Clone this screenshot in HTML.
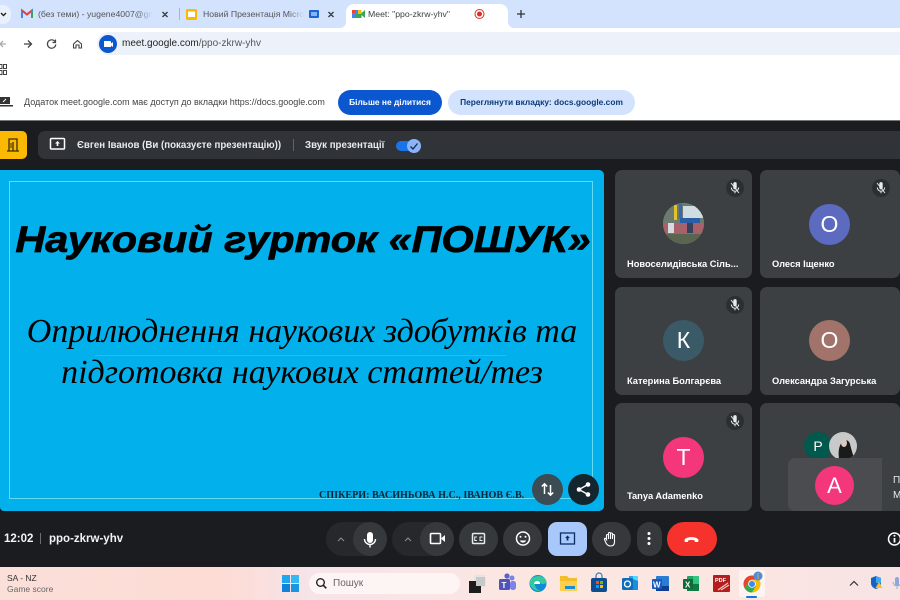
<!DOCTYPE html>
<html><head><meta charset="utf-8"><style>
html,body{margin:0;padding:0;width:900px;height:600px;overflow:hidden;background:#1b1c1f;font-family:"Liberation Sans",sans-serif}
.a{position:absolute;white-space:nowrap}
svg{position:absolute;overflow:visible}
.tile{position:absolute;width:137px;height:108px;background:#3c4043;border-radius:7px}
.av{position:absolute;width:41px;height:41px;border-radius:50%;color:#fff;font-size:23px;line-height:41px;text-align:center}
.nm{position:absolute;color:#fff;font-size:9.300px;font-weight:bold;white-space:nowrap}
.pill{position:absolute;background:#36393c;border-radius:17px;height:34px;top:522px}
</style></head><body>
<!-- tab strip -->
<div class="a" style="left:0;top:0;width:900px;height:28px;background:#d3e3fd"></div>
<div class="a" style="left:0;top:5px;width:11px;height:19px;background:#eaf1fd;border-radius:0 8px 8px 0"></div>
<svg style="left:0;top:0" width="900" height="28"><path d="M1 13l2.500 2.500L6 13" stroke="#222" stroke-width="1.400" fill="none"/>
<path d="M22 18V10.500l5 4 5-4V18" fill="none" stroke="#4285f4" stroke-width="2"/><path d="M22 10.500l5 4 5-4" fill="none" stroke="#ea4335" stroke-width="2"/><path d="M32 11v7" stroke="#34a853" stroke-width="2"/>
<path d="M162.500 12l5 5M167.500 12l-5 5M328.500 12l5 5M333.500 12l-5 5M493.500 12l5 5M498.500 12l-5 5" stroke="#333" stroke-width="1.300"/>
<rect x="179" y="8" width="1" height="12" fill="#9db8dc"/>
<rect x="186" y="9" width="11" height="11" rx="1.500" fill="#fbb900"/><rect x="188" y="11.500" width="7" height="5.500" fill="#fff"/>
<rect x="309" y="10" width="10" height="8" rx="1" fill="#1967d2"/><rect x="311" y="12" width="6" height="4" fill="#8ab4f8"/></svg>
<div class="a" style="left:38px;top:9px;font-size:8.700px;color:#555;width:115px;overflow:hidden;-webkit-mask-image:linear-gradient(90deg,#000 85%,transparent)">(без теми) - yugene4007@gmail.com</div>
<div class="a" style="left:203px;top:9px;font-size:8.700px;color:#555;width:101px;overflow:hidden;-webkit-mask-image:linear-gradient(90deg,#000 85%,transparent)">Новий Презентація Microsoft</div>
<div class="a" style="left:346px;top:4px;width:162px;height:24px;background:#fff;border-radius:8px 8px 0 0"></div>
<svg style="left:340px;top:22px" width="176" height="6"><path d="M0 6a6 6 0 0 0 6-6v6zM168 0a6 6 0 0 0 6 6h-6z" fill="#fff"/></svg>
<div class="a" style="left:368px;top:9px;font-size:8.700px;color:#3c4043">Meet: "ppo-zkrw-yhv"</div>
<svg style="left:340px;top:0" width="200" height="28"><rect x="12" y="10" width="6" height="8" fill="#4285f4"/><rect x="18" y="10" width="3.500" height="4" fill="#fbbc04"/><rect x="15" y="14" width="6.500" height="4" fill="#34a853"/><path d="M12 10h3v3h-3z" fill="#ea4335"/><path d="M21.500 13l3.500-3v8l-3.500-3z" fill="#34a853"/>
<circle cx="139.500" cy="14" r="4.500" fill="none" stroke="#d93025" stroke-width="1"/><circle cx="139.500" cy="14" r="2.500" fill="#d93025"/>
<path d="M181 10v8M177 14h8" stroke="#333" stroke-width="1.300"/></svg>
<!-- toolbar -->
<div class="a" style="left:0;top:28px;width:900px;height:92px;background:#fff"></div>
<div class="a" style="left:97px;top:32px;width:803px;height:23px;background:#edf2fa;border-radius:12px 0 0 12px"></div>
<svg style="left:0;top:28px" width="100" height="28"><path d="M0 16h6M3 13l-3 3 3 3" stroke="#aaa" stroke-width="1.300" fill="none"/>
<path d="M24 16h7M28 12.500l3.500 3.500-3.500 3.500" stroke="#444" stroke-width="1.300" fill="none"/>
<path d="M55 13.500a4.200 4.200 0 1 0 .8 3M55.500 11.500v3h-3" stroke="#444" stroke-width="1.200" fill="none"/>
<path d="M73.500 16l4-3.500 4 3.500v4h-2.500v-3h-3v3h-2.500z" stroke="#444" stroke-width="1.100" fill="none"/></svg>
<div class="a" style="left:99px;top:35px;width:18px;height:18px;border-radius:50%;background:#0b57d0"></div>
<svg style="left:99px;top:35px" width="18" height="18"><path d="M5 6h6a1 1 0 0 1 1 1v5H5z" fill="#fff"/><path d="M12 8.500l2-1.500v5l-2-1.500" fill="#fff"/></svg>
<div class="a" style="left:122px;top:38px;font-size:10px;color:#1f1f1f">meet.google.com<span style="color:#555">/ppo-zkrw-yhv</span></div>
<svg style="left:0;top:64px" width="8" height="12"><path d="M-2 .5h4v4h-4zM-2 6.500h4v4h-4zM3.500.5h3v4h-3zM3.500 6.500h3v4h-3z" fill="none" stroke="#444"/></svg>
<!-- info bar -->
<svg style="left:0;top:97px" width="14" height="11"><path d="M0 0h10v7H0z" fill="#333"/><path d="M0 8h13v1.500H0z" fill="#333"/><path d="M3 5l3-3" stroke="#fff"/></svg>
<div class="a" style="left:24px;top:97px;font-size:9px;color:#444">Додаток meet.google.com має доступ до вкладки https://docs.google.com</div>
<div class="a" style="left:338px;top:90px;width:104px;height:25px;line-height:25px;border-radius:13px;background:#0b57d0;color:#fff;font-size:8.400px;font-weight:bold;text-align:center">Більше не ділитися</div>
<div class="a" style="left:448px;top:90px;width:187px;height:25px;line-height:25px;border-radius:13px;background:#d3e3fd;color:#0a3a7a;font-size:8.400px;font-weight:bold;text-align:center">Переглянути вкладку: docs.google.com</div>
<div class="a" style="left:0;top:120px;width:900px;height:1px;background:#777"></div>
<!-- meet dark -->
<div class="a" style="left:0;top:121px;width:900px;height:446px;background:#1b1c1f"></div>
<div class="a" style="left:0;top:131px;width:27px;height:28px;background:#fbb904;border-radius:0 5px 5px 0"></div>
<svg style="left:0;top:131px" width="26" height="28"><path d="M9 20V8h8v12M7 20h12M13 11v9" fill="none" stroke="#3c3000" stroke-width="1.300"/><path d="M10.500 12h1v5h-1z" fill="#3c3000"/></svg>
<div class="a" style="left:38px;top:131px;width:862px;height:28px;background:#303438;border-radius:7px 0 0 7px"></div>
<svg style="left:49px;top:137px" width="18" height="16"><rect x="1.500" y="1.500" width="14" height="10.500" rx="1" fill="none" stroke="#fff" stroke-width="1.500"/><path d="M8.500 4l2.500 2.500H9.300V9H7.700V6.500H6z" fill="#fff"/></svg>
<div class="a" style="left:77px;top:140px;font-size:9.700px;font-weight:bold;color:#e8eaed">Євген Іванов (Ви (показуєте презентацію))</div>
<div class="a" style="left:293px;top:139px;width:1px;height:12px;background:#5f6368"></div>
<div class="a" style="left:305px;top:140px;font-size:9.700px;font-weight:bold;color:#e8eaed">Звук презентації</div>
<div class="a" style="left:396px;top:141px;width:20px;height:10px;border-radius:5px;background:#1a73e8"></div>
<div class="a" style="left:407px;top:139px;width:14px;height:14px;border-radius:50%;background:#8ab4f8"></div>
<svg style="left:407px;top:139px" width="14" height="14"><path d="M3.500 7.500l2.500 2.500 4.500-5.500" fill="none" stroke="#1b2b45" stroke-width="1.300"/></svg>
<!-- slide -->
<div class="a" style="left:0;top:170px;width:604px;height:341px;background:#02b1ec;border-radius:0 5px 5px 4px;overflow:hidden">
 <div class="a" style="left:9px;top:11px;width:582px;height:316px;border:1px solid #62dbf2"></div>
 <div class="a" style="left:95px;top:185px;width:411px;height:1px;background:#22bfe6"></div>
 <div class="a" style="left:303px;top:48px;transform:translateX(-50%) scaleX(1.104);font:italic bold 37.500px 'Liberation Sans',sans-serif;color:#000;-webkit-text-stroke:.7px #000">Науковий гурток «ПОШУК»</div>
 <div class="a" style="left:0;top:141px;width:604px;text-align:center;font:italic 34px 'Liberation Serif',serif;color:#000;line-height:41px">Оприлюднення наукових здобутків та<br>підготовка наукових статей/тез</div>
 <div class="a" style="left:319px;top:320px;font:bold 10.100px 'Liberation Serif',serif;color:#06283d">СПІКЕРИ: ВАСИНЬОВА Н.С., ІВАНОВ Є.В.</div>
</div>
<div class="a" style="left:532px;top:474px;width:31px;height:31px;border-radius:50%;background:#3c4b54"></div>
<svg style="left:532px;top:474px" width="31" height="31"><path d="M12.500 20V10M9.800 12.500l2.700-2.700 2.700 2.700M18.500 11v10M15.800 18.500l2.700 2.700 2.700-2.700" fill="none" stroke="#fff" stroke-width="1.500"/></svg>
<div class="a" style="left:568px;top:474px;width:31px;height:31px;border-radius:50%;background:#15252e"></div>
<svg style="left:568px;top:474px" width="31" height="31"><path d="M20 10.500l-9 5 9 5" fill="none" stroke="#fff" stroke-width="1.300"/><circle cx="20" cy="10.500" r="2.300" fill="#fff"/><circle cx="11" cy="15.500" r="2.300" fill="#fff"/><circle cx="20" cy="20.500" r="2.300" fill="#fff"/></svg>
<!-- tiles -->
<div class="tile" style="left:615px;top:170px"></div>
<div class="tile" style="left:760px;top:170px;width:140px"></div>
<div class="tile" style="left:615px;top:287px"></div>
<div class="tile" style="left:760px;top:287px;width:140px"></div>
<div class="tile" style="left:615px;top:403px"></div>
<div class="tile" style="left:760px;top:403px;width:140px"></div>
<svg width="0" height="0" style="position:absolute"><defs><g id="m"><circle cx="9" cy="9" r="9" fill="#2c2f32"/><path d="M7.300 4.800a1.700 1.700 0 0 1 3.400 0v3.800a1.700 1.700 0 0 1-3.400 0z" fill="#e8eaed"/><path d="M5.300 8.500a3.700 3.700 0 0 0 7.400 0M9 12.200v2M5 4l8 10" stroke="#e8eaed" stroke-width="1" fill="none"/></g></defs></svg>
<svg style="left:726px;top:179px" width="18" height="18"><use href="#m"/></svg>
<svg style="left:872px;top:179px" width="18" height="18"><use href="#m"/></svg>
<svg style="left:726px;top:296px" width="18" height="18"><use href="#m"/></svg>
<svg style="left:726px;top:412px" width="18" height="18"><use href="#m"/></svg>
<div class="av" style="left:663px;top:203px;overflow:hidden;background:#7d8b84">
<svg width="41" height="41" style="left:0;top:0"><rect width="41" height="41" fill="#6c7a70"/><rect x="20" y="3" width="21" height="12" fill="#cfdde0"/><path d="M11 2h3v15h-3z" fill="#e2c32c"/><path d="M16 1h3v14h-3z" fill="#3568b0"/><rect x="17" y="15" width="20" height="5" fill="#2a5ea6"/><rect y="20" width="41" height="11" fill="#a8606a"/><rect x="5" y="20" width="6" height="10" fill="#d5dbe0"/><rect x="24" y="20" width="6" height="10" fill="#37415c"/><rect y="31" width="41" height="10" fill="#59654f"/></svg></div>
<div class="av" style="left:809px;top:204px;background:#5c6bc0">О</div>
<div class="av" style="left:663px;top:320px;background:#3a5a68">К</div>
<div class="av" style="left:809px;top:320px;background:#a1736a">О</div>
<div class="av" style="left:663px;top:437px;background:#f4377a">Т</div>
<div class="nm" style="left:627px;top:259px">Новоселидівська Сіль...</div>
<div class="nm" style="left:772px;top:259px">Олеся Іщенко</div>
<div class="nm" style="left:627px;top:376px">Катерина Болгарєва</div>
<div class="nm" style="left:772px;top:376px">Олександра Загурська</div>
<div class="nm" style="left:627px;top:491px">Tanya Adamenko</div>
<div class="av" style="left:804px;top:432px;width:28px;height:28px;line-height:28px;font-size:14px;background:#00594c">Р</div>
<div class="a" style="left:829px;top:432px;width:28px;height:28px;border-radius:50%;background:#c9c9c9;overflow:hidden"><svg width="28" height="28" style="left:0;top:0"><path d="M10 27c-1-8 0-13 3-17 3-3 7-2 8 2 1 5 3 10 4 15z" fill="#1a1a1a"/><ellipse cx="15" cy="11" rx="3" ry="4" fill="#d8c8c0"/></svg></div>
<!-- self preview -->
<div class="a" style="left:788px;top:458px;width:112px;height:53px;background:#3c4043;border-radius:7px 0 0 7px"></div>
<div class="a" style="left:788px;top:458px;width:94px;height:53px;background:#4a4c50;border-radius:7px 0 0 7px"></div>
<div class="av" style="left:815px;top:466px;width:39px;height:39px;line-height:39px;font-size:22px;background:#f4377a">А</div>
<div class="a" style="left:893px;top:473px;font-size:10px;line-height:15px;color:#e8eaed">П<br>М</div>
<!-- bottom bar -->
<div class="a" style="left:4px;top:533px;font-size:11.500px;font-weight:bold;color:#f1f3f4">12:02</div>
<div class="a" style="left:40px;top:533px;width:1px;height:11px;background:#6b6f74"></div>
<div class="a" style="left:49px;top:533px;font-size:11.500px;font-weight:bold;color:#f1f3f4">ppo-zkrw-yhv</div>
<div class="pill" style="left:326px;width:60px;background:#26282b"></div>
<div class="a" style="left:353px;top:522px;width:34px;height:34px;border-radius:50%;background:#36393c"></div>
<div class="pill" style="left:392px;width:60px;background:#26282b"></div>
<div class="a" style="left:420px;top:522px;width:34px;height:34px;border-radius:50%;background:#36393c"></div>
<div class="pill" style="left:459px;width:39px"></div>
<div class="pill" style="left:503px;width:39px"></div>
<div class="a" style="left:548px;top:522px;width:39px;height:34px;border-radius:9px;background:#a8c7fa"></div>
<div class="pill" style="left:592px;width:39px"></div>
<div class="pill" style="left:637px;width:25px;border-radius:13px"></div>
<div class="a" style="left:667px;top:522px;width:50px;height:34px;border-radius:17px;background:#f5332c"></div>
<svg style="left:0;top:510px" width="900" height="57">
<path d="M338 31l3-3 3 3M405 31l3-3 3 3" fill="none" stroke="#8a8d90" stroke-width="1.100"/>
<rect x="367" y="22" width="6" height="11" rx="3" fill="#fff"/><path d="M364.500 29a5.500 5.500 0 0 0 11 0M370 34.500v3" fill="none" stroke="#fff" stroke-width="1.400"/>
<rect x="430.500" y="23.500" width="10" height="10" rx="1" fill="none" stroke="#fff" stroke-width="1.600"/><path d="M441.500 28l3.500-3v7l-3.500-3z" fill="#fff"/>
<rect x="472.500" y="23.500" width="12" height="10" rx="1" fill="none" stroke="#e8eaed" stroke-width="1.500"/><path d="M477 27h-2.300v3.500H477M482.500 27h-2.500v3.500h2.500" fill="none" stroke="#e8eaed"/>
<circle cx="523" cy="28.500" r="6.500" fill="none" stroke="#fff" stroke-width="1.500"/><circle cx="520.500" cy="26.800" r="1" fill="#fff"/><circle cx="525.500" cy="26.800" r="1" fill="#fff"/><path d="M519.800 30.500a3.500 3.500 0 0 0 6.400 0z" fill="#fff"/>
<rect x="560.500" y="23" width="14" height="11" fill="none" stroke="#0a2f66" stroke-width="1.300"/><path d="M567.500 25.500l2.500 2.500h-1.600v2.500h-1.800V28H565z" fill="#0a2f66"/>
<path d="M606.500 29v-3.500a1 1 0 0 1 2 0V29M608.500 29v-5.500a1 1 0 0 1 2 0V29M610.500 29v-5a1 1 0 0 1 2 0v5M612.500 29v-3.500a1 1 0 0 1 2 0V32c0 2.500-1.500 4-4 4s-3.500-1-4.500-3l-1.500-3.500c-.5-1 1-1.700 1.500-.7l1 1.700" fill="none" stroke="#fff" stroke-width="1.100"/>
<circle cx="649" cy="23.500" r="1.500" fill="#fff"/><circle cx="649" cy="28.500" r="1.500" fill="#fff"/><circle cx="649" cy="33.500" r="1.500" fill="#fff"/>
<path d="M684.500 30.500c0-4.500 14-4.500 14 0 0 1-.3 1.500-1 1.500h-2c-.6 0-.8-.5-.8-1.500-1.500-.7-5-.7-6.500 0 0 1-.2 1.500-.8 1.500h-2c-.6 0-.9-.5-.9-1.500z" fill="#fff"/>
<circle cx="894.500" cy="29" r="6" fill="none" stroke="#fff" stroke-width="1.500"/><path d="M894.500 28v4.500" stroke="#fff" stroke-width="1.800"/><circle cx="894.500" cy="25.800" r="1" fill="#fff"/>
</svg>
<!-- taskbar -->
<div class="a" style="left:0;top:567px;width:900px;height:33px;background:linear-gradient(90deg,#fbdfd9 0%,#fddcd5 25%,#f5e4ea 35%,#fde6e0 60%,#fbe6e2 80%,#f7e3e4 100%)"></div>
<div class="a" style="left:7px;top:573px;font-size:8.500px;color:#333">SA - NZ</div>
<div class="a" style="left:7px;top:584px;font-size:8.500px;color:#666">Game score</div>
<svg style="left:282px;top:575px" width="17" height="17"><rect width="8" height="8" fill="#1ea7ee"/><rect x="9" width="8" height="8" fill="#35b9f2"/><rect y="9" width="8" height="8" fill="#0f83d8"/><rect x="9" y="9" width="8" height="8" fill="#1a95e2"/></svg>
<div class="a" style="left:309px;top:573px;width:151px;height:21px;border-radius:11px;background:#fdf5f3"></div>
<svg style="left:315px;top:577px" width="13" height="13"><circle cx="5.500" cy="5.500" r="3.800" fill="none" stroke="#222" stroke-width="1.400"/><path d="M8.300 8.300l3 3" stroke="#222" stroke-width="1.600"/></svg>
<div class="a" style="left:333px;top:578px;font-size:10px;color:#666">Пошук</div>
<svg style="left:450px;top:567px" width="450" height="33">
<rect x="24" y="8" width="12" height="12" fill="#e4e4e4"/><rect x="19" y="14" width="12" height="12" fill="#1c1c1c"/><rect x="26" y="10" width="9" height="9" fill="#c8c8c8"/>
<rect x="49" y="12" width="11" height="11" rx="1.500" fill="#4f55b8"/><circle cx="62" cy="11" r="2.500" fill="#7b83eb"/><rect x="60" y="14" width="6" height="9" rx="2.500" fill="#7b83eb"/><circle cx="57" cy="9" r="2.600" fill="#5b62c9"/><text x="51.500" y="21" font-size="8" font-weight="bold" fill="#fff" font-family="Liberation Sans">T</text>
<circle cx="88" cy="16.500" r="8.500" fill="#0f8ad8"/><path d="M80 14c2-6 13-7 16-1 1 2 0 4-3 4-4 0-3-3-6-3-3 0-3 5 0 8 1 1 3 2 5 2-6 1-13-3-12-10z" fill="#36c9a0"/><path d="M84 17c0-2 2-3 3-3 2 0 3 1 3 3z" fill="#fff"/>
<path d="M110 9h7l2 2h8v13h-17z" fill="#f4bd2a"/><rect x="110" y="14" width="17" height="10" fill="#fcd04f"/><rect x="115" y="19" width="10" height="3" fill="#1a8cd8"/>
<rect x="141" y="11" width="16" height="14" rx="2" fill="#0f4d92"/><path d="M146 11V9a3 3 0 0 1 6 0v2" fill="none" stroke="#2c7ac0" stroke-width="1.200"/><rect x="146" y="14" width="3" height="3" fill="#f25022"/><rect x="150" y="14" width="3" height="3" fill="#7fba00"/><rect x="146" y="18" width="3" height="3" fill="#00a4ef"/><rect x="150" y="18" width="3" height="3" fill="#ffb900"/>
<rect x="179" y="9" width="9" height="7" fill="#28a8ea"/><path d="M179 12h9l0 11h-9z" fill="#1490df"/><rect x="172" y="11" width="11" height="12" rx="1.500" fill="#0f6cbd"/><circle cx="177.500" cy="17" r="3" fill="none" stroke="#fff" stroke-width="1.300"/><path d="M183 9h5v5l-5-2z" fill="#50d9ff"/>
<rect x="206" y="9" width="13" height="15" rx="1" fill="#2b7cd3"/><rect x="206" y="19" width="13" height="5" fill="#103f91"/><rect x="202" y="12" width="10" height="10" rx="1" fill="#185abd"/><text x="203" y="20.500" font-size="8" font-weight="bold" fill="#fff" font-family="Liberation Sans">W</text>
<rect x="237" y="9" width="12" height="15" rx="1" fill="#21a366"/><rect x="243" y="9" width="6" height="8" fill="#33c481"/><rect x="237" y="17" width="12" height="7" fill="#107c41"/><rect x="233" y="12" width="10" height="10" rx="1" fill="#0e6b3a"/><text x="235" y="20.500" font-size="8" font-weight="bold" fill="#fff" font-family="Liberation Sans">X</text>
<rect x="263" y="8" width="17" height="17" rx="1" fill="#b71c1c"/><text x="265" y="15" font-size="5.500" font-weight="bold" fill="#fff" font-family="Liberation Sans">PDF</text><path d="M268 23l10-7M271 23l8-5" stroke="#f0c8c8" stroke-width="1.200"/>
<rect x="289" y="3" width="26" height="27" rx="2" fill="#fdf3f0"/><rect x="296" y="29" width="11" height="2" rx="1" fill="#0f7ad8"/>
<circle cx="302" cy="17" r="8.500" fill="#fbbc04"/><path d="M302 8.500a8.500 8.500 0 0 0-7.400 12.700l3.700-6.200a4 4 0 0 1 3.700-2.500h7.400A8.500 8.500 0 0 0 302 8.500z" fill="#ea4335"/><path d="M294.600 21.200A8.500 8.500 0 0 0 302 25.500l3.700-6.300-7.400-4.200z" fill="#34a853"/><circle cx="302" cy="17" r="3.800" fill="#fff"/><circle cx="302" cy="17" r="3" fill="#4285f4"/><circle cx="308" cy="9" r="4.500" fill="#4b8fd8"/><path d="M308 6v6" stroke="#e8a23c"/>
<path d="M400 18.500l4-4 4 4" fill="none" stroke="#333" stroke-width="1.200"/>
<path d="M421 11l5-2 5 2v5c0 3-2 5-5 6-3-1-5-3-5-6z" fill="#1565c0"/><path d="M426 9l5 2v5h-5z" fill="#42a5f5"/><path d="M429 15l3.500 6h-7z" fill="#fbc02d"/>
<rect x="445" y="10" width="4" height="9" rx="2" fill="#8fa8d8"/><path d="M443 15a4 4 0 0 0 8 0M447 20v2" stroke="#8fa8d8" fill="none"/>
</svg>
</body></html>
